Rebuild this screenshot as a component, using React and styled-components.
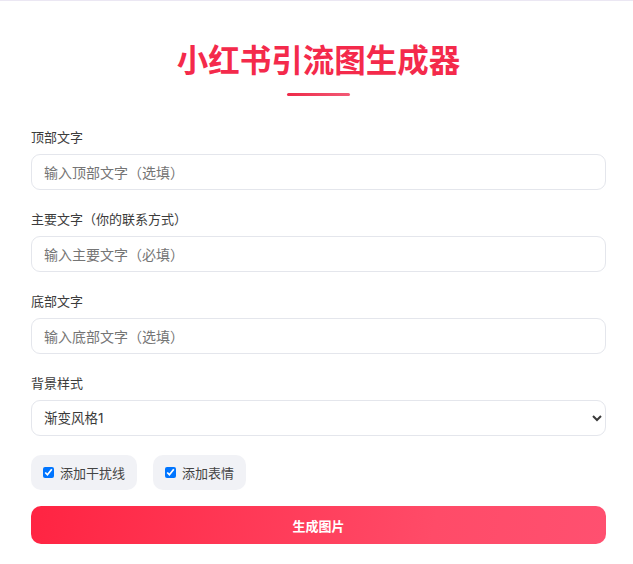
import { useState } from "react";
import styled, { createGlobalStyle } from "styled-components";

const GlobalStyle = createGlobalStyle`
  * {
    box-sizing: border-box;
  }

  body {
    margin: 0;
    background: #ebe7f3;
    font-family: "Inter", "Noto Sans CJK SC", sans-serif;
    color: #333;
  }
`;

const fields = [
  { id: "top", label: "顶部文字", placeholder: "输入顶部文字（选填）" },
  { id: "main", label: "主要文字（你的联系方式）", placeholder: "输入主要文字（必填）" },
  { id: "bottom", label: "底部文字", placeholder: "输入底部文字（选填）" },
];

const App = () => {
  const [values, setValues] = useState({ top: "", main: "", bottom: "" });
  const [bg, setBg] = useState("1");
  const [noise, setNoise] = useState(true);
  const [emoji, setEmoji] = useState(true);

  const changeHandler = (id) => (e) => {
    setValues({ ...values, [id]: e.target.value });
  };

  return (
    <>
      <GlobalStyle />
      <Card>
        <Header>
          <Title>小红书引流图生成器</Title>
          <Underline />
        </Header>

        {fields.map((field) => (
          <Group key={field.id}>
            <Label htmlFor={field.id}>{field.label}</Label>
            <Input
              id={field.id}
              placeholder={field.placeholder}
              value={values[field.id]}
              onChange={changeHandler(field.id)}
            />
          </Group>
        ))}

        <Group>
          <Label htmlFor="bg">背景样式</Label>
          <Select id="bg" value={bg} onChange={(e) => setBg(e.target.value)}>
            <option value="1">渐变风格1</option>
            <option value="2">渐变风格2</option>
            <option value="3">渐变风格3</option>
          </Select>
        </Group>

        <Options>
          <Option>
            <input
              type="checkbox"
              checked={noise}
              onChange={() => setNoise(!noise)}
            />
            添加干扰线
          </Option>
          <Option>
            <input
              type="checkbox"
              checked={emoji}
              onChange={() => setEmoji(!emoji)}
            />
            添加表情
          </Option>
        </Options>

        <GenerateButton>生成图片</GenerateButton>
      </Card>
    </>
  );
};

const Card = styled.div`
  margin-top: 1px;
  min-height: 563px;
  background: #fff;
  padding: 40px 27px 0 31px;
`;

const Header = styled.div`
  display: flex;
  flex-direction: column;
  align-items: center;
  margin-bottom: 31px;
`;

const Title = styled.h1`
  margin: 0;
  font-size: 31.5px;
  line-height: 40px;
  font-weight: 700;
  color: #f42a4b;
  letter-spacing: 0;
`;

const Underline = styled.div`
  width: 63px;
  height: 3px;
  margin-top: 12px;
  border-radius: 2px;
  background: linear-gradient(90deg, #ee2a48, #f25a76);
`;

const Group = styled.div`
  margin-bottom: 19px;
`;

const Label = styled.label`
  display: block;
  font-size: 13px;
  line-height: 20px;
  font-weight: 400;
  color: #3c3c3c;
  margin-bottom: 7px;
`;

const Input = styled.input`
  display: block;
  width: 100%;
  height: 36px;
  padding: 0 12px;
  border: 1px solid #e4e6ec;
  border-radius: 9px;
  font-family: inherit;
  font-size: 14px;
  color: #333;
  outline: none;

  ::placeholder {
    color: #8d8d8d;
  }
`;

const Select = styled.select`
  display: block;
  width: 100%;
  height: 36px;
  padding: 0 8px;
  border: 1px solid #e4e6ec;
  border-radius: 9px;
  background: #fff;
  font-family: inherit;
  font-size: 13.5px;
  color: #3a3a3a;
  outline: none;
`;

const Options = styled.div`
  display: flex;
  gap: 16px;
  margin-bottom: 16px;
`;

const Option = styled.label`
  display: flex;
  align-items: center;
  gap: 6px;
  height: 35px;
  padding: 0 12px;
  background: #f1f2f6;
  border-radius: 10px;
  font-size: 13px;
  color: #444;

  input {
    margin: 0;
    width: 11px;
    height: 11px;
  }
`;

const GenerateButton = styled.button`
  display: flex;
  justify-content: center;
  align-items: center;
  width: 100%;
  height: 38px;
  border: none;
  border-radius: 10px;
  background: linear-gradient(100deg, #ff2442, #ff4b68 70%, #ff5070);
  color: #fff;
  font-family: inherit;
  font-size: 13px;
  font-weight: 700;
  cursor: pointer;
`;

export default App;
